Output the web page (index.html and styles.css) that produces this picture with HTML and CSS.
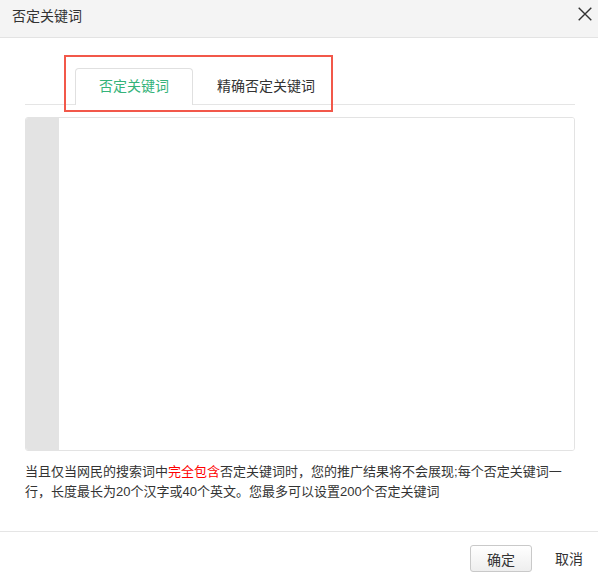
FILE: index.html
```html
<!DOCTYPE html>
<html lang="zh-CN">
<head>
<meta charset="utf-8">
<title>否定关键词</title>
<link rel="stylesheet" href="styles.css">
</head>
<body>
<div class="dialog">
  <div class="header">
    <span class="title">否定关键词</span>
    <span class="close" aria-label="关闭">
      <svg width="14" height="14" viewBox="0 0 14 14"><path d="M0.7 0.7 L13.3 13.3 M13.3 0.7 L0.7 13.3" stroke="#333" stroke-width="1.4" fill="none"/></svg>
    </span>
  </div>
  <div class="body">
    <div class="tabs">
      <div class="tab active">否定关键词</div>
      <div class="tab">精确否定关键词</div>
    </div>
    <div class="highlight"></div>
    <div class="editor">
      <div class="gutter"></div>
      <textarea class="input"></textarea>
    </div>
    <p class="note">当且仅当网民的搜索词中<span class="red">完全包含</span>否定关键词时，您的推广结果将不会展现;每个否定关键词一行，长度最长为20个汉字或40个英文。您最多可以设置200个否定关键词</p>
  </div>
  <div class="footer">
    <button class="btn">确定</button>
    <span class="cancel">取消</span>
  </div>
</div>
</body>
</html>
```
FILE: styles.css
```css
html, body {
  margin: 0;
  padding: 0;
  background: #fff;
}
body {
  font-family: "Liberation Sans", "Noto Sans CJK SC", sans-serif;
  color: #333;
  width: 598px;
  height: 579px;
  overflow: hidden;
}
.dialog {
  position: relative;
  width: 598px;
}
.header {
  height: 37px;
  background: #f4f4f4;
  border-bottom: 1px solid #e3e3e3;
  display: flex;
  align-items: flex-start;
  justify-content: space-between;
}
.title {
  font-size: 14px;
  line-height: 32px;
  padding-left: 12px;
}
.close {
  display: flex;
  margin-top: 7px;
  margin-right: 6px;
}
.body {
  padding: 30px 23px 0 25px;
}
.tabs {
  display: flex;
  padding-left: 50px;
  border-bottom: 1px solid #e5e5e5;
  height: 36px;
}
.tab {
  font-size: 14px;
  line-height: 36px;
  height: 36px;
  padding: 0 24px;
  color: #333;
}
.tab.active {
  color: #35b37a;
  padding: 0 23px;
  border: 1px solid #e0e0e0;
  border-bottom: none;
  border-radius: 4px 4px 0 0;
  background: #fff;
  height: 36px;
  line-height: 35px;
  box-sizing: border-box;
  height: 37px;
}
.highlight {
  position: absolute;
  left: 64px;
  top: 55px;
  width: 265px;
  height: 53px;
  border: 2px solid #f2584a;
}
.editor {
  margin-top: 12px;
  height: 332px;
  border: 1px solid #e3e3e3;
  border-radius: 3px;
  display: flex;
  overflow: hidden;
}
.gutter {
  width: 33px;
  background: #e3e3e3;
}
.input {
  flex: 1;
  border: none;
  outline: none;
  resize: none;
  margin: 0;
  padding: 4px 6px;
  font-family: inherit;
  font-size: 13px;
  background: #fff;
}
.note {
  margin: 11px 0 0 0;
  padding-right: 8px;
  font-size: 13px;
  line-height: 20px;
  color: #333;
}
.red {
  color: #ff0000;
}
.footer {
  margin-top: 29px;
  border-top: 1px solid #e5e5e5;
  display: flex;
  justify-content: flex-end;
  align-items: center;
  padding: 13px 15px 0 0;
}
.btn {
  width: 62px;
  height: 27px;
  font-family: inherit;
  font-size: 14px;
  color: #333;
  border: 1px solid #c9c9c9;
  border-radius: 3px;
  background: linear-gradient(#ffffff, #eeeeee);
  padding: 0;
  margin: 0;
}
.cancel {
  font-size: 14px;
  margin-left: 23px;
  margin-top: -1px;
}
```
